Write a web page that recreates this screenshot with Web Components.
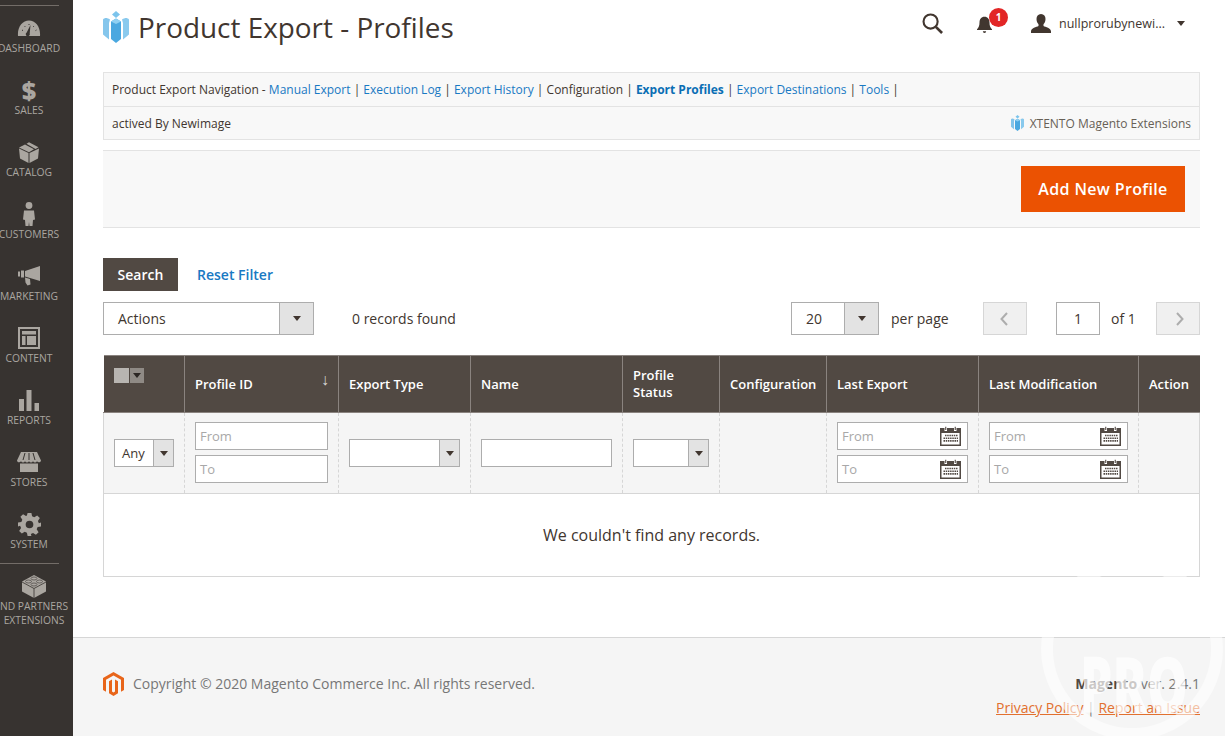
<!DOCTYPE html>
<html>
<head>
<meta charset="utf-8">
<title>Product Export - Profiles</title>
<style>
  html, body { margin: 0; height: 100%; overflow: hidden; }
  body { font-family: "Open Sans", "Liberation Sans", sans-serif; font-size: 14px; color: #41362f; background: #fff; }
</style>
</head>
<body>
<admin-shell>
  <admin-menu slot="menu">
    <menu-item icon="dashboard">Dashboard</menu-item>
    <menu-item icon="sales">Sales</menu-item>
    <menu-item icon="catalog">Catalog</menu-item>
    <menu-item icon="customers">Customers</menu-item>
    <menu-item icon="marketing">Marketing</menu-item>
    <menu-item icon="content">Content</menu-item>
    <menu-item icon="reports">Reports</menu-item>
    <menu-item icon="stores">Stores</menu-item>
    <menu-item icon="system">System</menu-item>
    <menu-item icon="extensions" class="last">nd Partners<br>Extensions</menu-item>
  </admin-menu>
  <page-header>Product Export - Profiles</page-header>
  <export-nav></export-nav>
  <action-bar>Add New Profile</action-bar>
  <grid-toolbar></grid-toolbar>
  <profile-grid></profile-grid>
  <page-footer slot="footer"></page-footer>
</admin-shell>
<water-mark></water-mark>

<script>
// shared svg bits
const XTENTO = `<svg viewBox="0 0 26 32" width="100%" height="100%"><path fill="#7cc4ec" d="M13 0l4 3.500-4 3.500-4-3.500z"/><path fill="#5cb3e6" d="M7 8.500C4 6.500 1.500 6.500 0 8.500v15l6 5V12z" opacity=".75"/><path fill="#6dbdea" d="M19 8.500c3-2 5.500-2 7 0v15l-6 5V12z" opacity=".8"/><path fill="#4aa8e0" d="M8 10.500l5-3 5 3V28l-5 4-5-4z"/><path fill="#8fd0f2" d="M13 7.500l5 3-5 2.500-5-2.500z"/></svg>`;

const MENU_ICONS = {
  dashboard: `<svg viewBox="0 0 24 16" width="24" height="16"><path fill="#aaa6a0" fill-rule="evenodd" d="M1 16C.2 7 5.500 .5 12 .5S23.800 7 23 16zM13.500 5l-3.800 7.500a2 2 0 1 0 3 1z"/><path stroke="#373330" stroke-width="1" d="M5 10l1 .6M7.500 6l.7.8M12 4v1M17 6l-.7.8M19.500 10l-1 .6" fill="none"/></svg>`,
  sales: `<span style="font:800 25px/24px 'Open Sans',sans-serif;color:#aaa6a0">$</span>`,
  catalog: `<svg viewBox="0 0 20 21" width="20" height="21"><path fill="#aaa6a0" d="M0 6.500L9.500 11v10L1 16.500zM20 6.500L10.500 11v10l8.500-4.500zM0 5.500L6 2.500l9 4.700-5 3zM7.500 1.700L10 .3l9.500 5-3 1.600z"/></svg>`,
  customers: `<svg viewBox="0 0 12 24" width="12" height="24"><circle cx="6" cy="3.500" r="3.400" fill="#aaa6a0"/><path fill="#aaa6a0" d="M1 8.500h10l1 9-2 .5-.5 6H6.500L6 20l-.5 4H2.500L2 18l-2-.5z"/></svg>`,
  marketing: `<svg viewBox="0 0 22 20" width="22" height="20"><path fill="#aaa6a0" d="M22 0v15L7 10.500V5zM0 5.500h2v5H0zM3 4.500h3v7H3zM7 11.500l5 1.500 .5 5.500-3 1-2-3z"/></svg>`,
  content: `<svg viewBox="0 0 22 22" width="22" height="22"><path fill="#aaa6a0" fill-rule="evenodd" d="M0 0h22v22H0zM2 2v18h18V2z"/><path fill="#aaa6a0" d="M4 4h14v3.500H4zM4 9h3.500v9H4zM9 9h9v9H9z"/></svg>`,
  reports: `<svg viewBox="0 0 20 21" width="20" height="21"><path fill="#aaa6a0" d="M0 9h5v12H0zM7.500 0h5v21h-5zM15.500 13h4.500v8h-4.500z"/></svg>`,
  stores: `<svg viewBox="0 0 24 20" width="24" height="20"><path fill="#aaa6a0" d="M4 0h16l4 8.500c0 2-3 2.500-4 .8-1 1.700-3 1.700-4 0-1 1.700-3 1.700-4 0-1 1.700-3 1.700-4 0-1 1.700-3 1.700-4 0-1 1.700-4 1.200-4-.8z"/><path stroke="#373330" stroke-width="1" d="M8 1L6 8M12 1v7M16 1l2 7" fill="none"/><path fill="#aaa6a0" d="M3 11.500h18V20H3z"/></svg>`,
  system: `<svg viewBox="0 0 24 24" width="23" height="23"><path fill="#aaa6a0" fill-rule="evenodd" d="M10 0h4l.7 3.500 2.300 1 3-2 2.800 2.800-2 3 1 2.300L24 10v4l-3.500.7-1 2.300 2 3-2.800 2.800-3-2-2.300 1L14 24h-4l-.7-3.500-2.300-1-3 2L1.200 18.700l2-3-1-2.300L0 14v-4l3.500-.7 1-2.300-2-3L5.300 1.200l3 2 1-.7zM12 8a4 4 0 1 0 0 8 4 4 0 0 0 0-8z"/></svg>`,
  extensions: `<svg viewBox="0 0 24 23" width="24" height="23"><path fill="#aaa6a0" d="M12 0l12 6.500v10L12 23 0 16.500v-10z"/><path stroke="#373330" stroke-width=".8" fill="none" d="M0 7l12 6.500L24 7M12 13.500V23"/><ellipse cx="12" cy="3.500" rx="3" ry="1.500" fill="#aaa6a0" stroke="#373330" stroke-width=".6"/><ellipse cx="6.500" cy="6.500" rx="3" ry="1.500" fill="#aaa6a0" stroke="#373330" stroke-width=".6"/><ellipse cx="17.500" cy="6.500" rx="3" ry="1.500" fill="#aaa6a0" stroke="#373330" stroke-width=".6"/><ellipse cx="12" cy="9.500" rx="3" ry="1.500" fill="#aaa6a0" stroke="#373330" stroke-width=".6"/></svg>`
};

class AdminShell extends HTMLElement {
  constructor() {
    super();
    this._root = this.attachShadow({mode: 'open'});
    this._root.innerHTML = `
      <style>
        :host { display: flex; height: 736px; overflow: hidden; }
        .side { flex: 0 0 73px; width: 73px; background: #373330; overflow: hidden; }
        .main { flex: 1; min-width: 0; display: flex; flex-direction: column; }
        .content { flex: 0 0 637px; box-sizing: border-box; padding: 0 25px 0 30px; }
        .foot { flex: 1; display: flex; }
      </style>
      <div class="side"><slot name="menu"></slot></div>
      <div class="main">
        <div class="content"><slot></slot></div>
        <div class="foot"><slot name="footer"></slot></div>
      </div>
    `;
  }
}

class AdminMenu extends HTMLElement {
  constructor() {
    super();
    this._root = this.attachShadow({mode: 'open'});
    this._root.innerHTML = `
      <style>
        :host { display: block; width: 88px; margin-left: -15px; padding-top: 5px; }
        .rule { width: 59px; margin-left: 15px; border-top: 1px solid #736d68; }
      </style>
      <div class="rule"></div>
      <slot></slot>
    `;
    // the divider before the last entry
    const rule = document.createElement('menu-rule');
    const last = this.querySelector('.last');
    if (last) this.insertBefore(rule, last);
  }
}

class MenuRule extends HTMLElement {
  constructor() {
    super();
    this.attachShadow({mode: 'open'}).innerHTML = `
      <style>:host { display: block; width: 59px; margin: -1px 0 0 15px; border-top: 1px solid #736d68; }</style>
    `;
  }
}

class MenuItem extends HTMLElement {
  constructor() {
    super();
    const icon = this.getAttribute('icon');
    this._root = this.attachShadow({mode: 'open'});
    this._root.innerHTML = `
      <style>
        :host { display: block; height: 62px; box-sizing: border-box; text-align: center; color: #aaa6a0; }
        :host(.last) { height: 72px; padding-left: 10px; }
        .ico { box-sizing: border-box; height: 34px; padding-top: 10px; display: flex; align-items: center; justify-content: center; }
        .lbl { font-size: 10.3px; line-height: 14px; margin-top: 1px; text-transform: uppercase; white-space: nowrap; }
      </style>
      <div class="ico">${MENU_ICONS[icon] || ''}</div>
      <div class="lbl"><slot></slot></div>
    `;
  }
}

class PageHeader extends HTMLElement {
  constructor() {
    super();
    this._root = this.attachShadow({mode: 'open'});
    this._root.innerHTML = `
      <style>
        :host { display: flex; align-items: center; height: 72px; box-sizing: border-box; padding: 0 15px 18px 0; }
        .logo { width: 26px; height: 32px; margin-right: 9px; }
        h1 { margin: 0; font-size: 27.9px; font-weight: 400; line-height: 36px; color: #41362f; flex: 1; }
        .tools { display: flex; align-items: center; margin-bottom: 7px; }
        .search { width: 21px; height: 21px; margin-right: 34px; }
        .bell { position: relative; width: 22px; height: 22px; margin-right: 32px; }
        .badge { position: absolute; left: 12px; top: -5px; width: 19px; height: 19px; border-radius: 50%; background: #e22626; color: #fff; font-size: 10px; font-weight: 700; line-height: 19px; text-align: center; }
        .user { width: 20px; height: 20px; margin-right: 8px; }
        .name { font-size: 12.5px; color: #41362f; width: 118px; white-space: nowrap; }
        .caret { width: 0; height: 0; border: 4.5px solid transparent; border-top: 5px solid #41362f; border-bottom: 0; }
      </style>
      <div class="logo">${XTENTO}</div>
      <h1><slot></slot></h1>
      <div class="tools">
        <svg class="search" viewBox="0 0 22 22"><circle cx="9" cy="9" r="7.400" fill="none" stroke="#41362f" stroke-width="2.200"/><path d="M14.500 14.500l6.500 6.500" stroke="#41362f" stroke-width="2.800"/></svg>
        <div class="bell">
          <svg viewBox="0 0 18 22" width="15" height="20" style="margin-top:2px"><path fill="#41362f" d="M9 1c4 0 6 3 6 7 0 4 1 6 3 8v1H0v-1c2-2 3-4 3-8 0-4 2-7 6-7zM7 18.500h4a2 2 0 0 1-4 0z"/></svg>
          <span class="badge">1</span>
        </div>
        <svg class="user" viewBox="0 0 20 20"><path fill="#41362f" d="M10 0c3 0 4.500 2.200 4.500 5 0 2.300-1 4.300-2 5.300v1.700c2 1 7.500 2 7.500 5.500V19H0v-1.500c0-3.500 5.500-4.500 7.500-5.500v-1.700c-1-1-2-3-2-5.300C5.500 2.200 7 0 10 0z"/></svg>
        <span class="name">nullprorubynewi...</span>
        <span class="caret"></span>
      </div>
    `;
  }
}

class ExportNav extends HTMLElement {
  constructor() {
    super();
    this._root = this.attachShadow({mode: 'open'});
    this._root.innerHTML = `
      <style>
        :host { display: block; border: 1px solid #e3e3e3; background: #f8f8f8; font-size: 12px; color: #41362f; }
        .row { display: flex; align-items: center; padding: 0 8px; }
        .one { height: 33px; border-bottom: 1px solid #e3e3e3; }
        .two { height: 32px; justify-content: space-between; }
        .links { white-space: pre; letter-spacing: -.002px; }
        a { text-decoration: none; color: #1979c3; }
        a.on { font-weight: 700; color: #0a6eb4; }
        .brand { display: flex; align-items: center; color: #676056; }
        .brand i { display: block; width: 13px; height: 16px; margin-right: 6px; }
      </style>
      <div class="row one"><span class="links">Product Export Navigation - <a href="#">Manual Export</a> | <a href="#">Execution Log</a> | <a href="#">Export History</a> | Configuration | <a class="on" href="#">Export Profiles</a> | <a href="#">Export Destinations</a> | <a href="#">Tools</a> |</span></div>
      <div class="row two"><span>actived By Newimage</span><span class="brand"><i>${XTENTO}</i>XTENTO Magento Extensions</span></div>
    `;
  }
}

class ActionBar extends HTMLElement {
  constructor() {
    super();
    this._root = this.attachShadow({mode: 'open'});
    this._root.innerHTML = `
      <style>
        :host { display: flex; justify-content: flex-end; align-items: center; box-sizing: border-box; height: 78px; margin-top: 10px; padding-right: 15px; background: #f8f8f8; border-top: 1px solid #e3e3e3; border-bottom: 1px solid #e3e3e3; }
        button { height: 46px; width: 164px; border: 1px solid #eb5202; background: #eb5202; color: #fff; font: 600 16px "Open Sans", sans-serif; letter-spacing: .35px; padding: 0; }
      </style>
      <button><slot></slot></button>
    `;
  }
}

class SelectBox extends HTMLElement {
  constructor() {
    super();
    this._root = this.attachShadow({mode: 'open'});
    this._root.innerHTML = `
      <style>
        :host { display: flex; box-sizing: border-box; height: 28px; border: 1px solid #adadad; background: #fff; font-size: 13px; color: #41362f; }
        .val { flex: 1; min-width: 0; display: flex; align-items: center; padding-left: var(--pad, 7px); }
        .btn { flex: 0 0 var(--btn, 19px); background: #e3e3e3; border-left: 1px solid #adadad; display: flex; align-items: center; justify-content: center; }
        .btn i { width: 0; height: 0; border: 4.5px solid transparent; border-top: 5px solid #41362f; border-bottom: 0; }
      </style>
      <div class="val"><slot></slot></div>
      <div class="btn"><i></i></div>
    `;
  }
}

class TextBox extends HTMLElement {
  constructor() {
    super();
    const cal = this.hasAttribute('calendar');
    this._root = this.attachShadow({mode: 'open'});
    this._root.innerHTML = `
      <style>
        :host { display: flex; align-items: center; justify-content: space-between; box-sizing: border-box; height: 28px; padding: 0 6px 0 4px; border: 1px solid #adadad; background: #fff; font-size: 13px; color: #a8a8a8; }
        svg { display: block; }
      </style>
      <span><slot></slot></span>
      ${cal ? `<svg viewBox="0 0 21 21" width="21" height="21"><path fill="#514943" d="M0 3h21v18H0z"/><path fill="#fff" d="M1.500 8h18v11.500h-18z"/><path fill="#fff" d="M4.500 1h2.500v5H4.500zM14 1h2.500v5H14z"/><path fill="#514943" d="M5.200 1.800h1.100v3.200H5.200zM14.700 1.800h1.100v3.200h-1.100z"/><path stroke="#514943" stroke-width="1.600" stroke-dasharray="1.500 .7" d="M5 10.500h13M3.500 13.200h14.500M3.500 15.900h14.500" fill="none"/></svg>` : ''}
    `;
  }
}

class GridToolbar extends HTMLElement {
  constructor() {
    super();
    this._root = this.attachShadow({mode: 'open'});
    this._root.innerHTML = `
      <style>
        :host { display: block; padding-top: 30px; font-size: 14px; color: #41362f; }
        .top { display: flex; align-items: center; height: 33px; gap: 19px; }
        .search { box-sizing: border-box; width: 75px; height: 33px; background: #514943; color: #fff; font-weight: 600; display: flex; align-items: center; justify-content: center; }
        .reset { color: #1979c3; font-weight: 600; }
        .bottom { display: flex; align-items: center; height: 33px; margin-top: 11px; }
        select-box { height: 33px; font-size: 14px; }
        .actions { width: 211px; --pad: 14px; --btn: 33px; }
        .found { margin-left: 38px; flex: 1; }
        .perpage { width: 88px; --pad: 14px; --btn: 33px; }
        .pp { margin-left: 12px; width: 92px; }
        .nav { box-sizing: border-box; width: 44px; height: 33px; background: #f0f0f0; border: 1px solid #d6d6d6; display: flex; align-items: center; justify-content: center; }
        .cur { box-sizing: border-box; width: 44px; height: 33px; margin-left: 29px; border: 1px solid #adadad; display: flex; align-items: center; justify-content: center; }
        .of { margin-left: 11px; width: 45px; }
      </style>
      <div class="top"><span class="search">Search</span><span class="reset">Reset Filter</span></div>
      <div class="bottom">
        <select-box class="actions">Actions</select-box>
        <span class="found">0 records found</span>
        <select-box class="perpage">20</select-box>
        <span class="pp">per page</span>
        <span class="nav"><svg width="8" height="14" viewBox="0 0 8 14" style="margin-right:3px"><path d="M7 1L1.500 7 7 13" fill="none" stroke="#adadad" stroke-width="2"/></svg></span>
        <span class="cur">1</span>
        <span class="of">of 1</span>
        <span class="nav"><svg width="8" height="14" viewBox="0 0 8 14" style="margin-left:3px"><path d="M1 1l5.500 6L1 13" fill="none" stroke="#adadad" stroke-width="2"/></svg></span>
      </div>
    `;
  }
}

class ProfileGrid extends HTMLElement {
  constructor() {
    super();
    this._root = this.attachShadow({mode: 'open'});
    this._root.innerHTML = `
      <style>
        :host { display: block; margin-top: 20px; }
        table { width: 1096px; table-layout: fixed; border-collapse: collapse; font-size: 13px; }
        th { box-sizing: border-box; height: 57px; background: #514943; color: #fff; font-weight: 600; text-align: left; padding: 0 10px; line-height: 17px; border-left: 1px solid #8a837f; border-top: 1px solid #8a837f; border-bottom: 1px solid #8a837f; position: relative; }
        th:first-child { border-left: 0; }
        .arrow { position: absolute; right: 9px; top: 15px; font-weight: 400; font-size: 16px; color: #d6d6d6; }
        .mass { position: absolute; left: 10px; top: 12px; display: flex; width: 30px; height: 15px; background: #b8b5b1; }
        .mass b { width: 15px; margin-left: 15px; background: #8f8a85; display: flex; align-items: center; justify-content: center; border-left: 1px solid #514943; }
        .mass i { width: 0; height: 0; border: 4px solid transparent; border-top: 5px solid #2b2623; border-bottom: 0; }
        td.f { box-sizing: border-box; height: 81px; background: #f5f5f5; padding: 0 10px; border-left: 1px dashed #d6d6d6; border-bottom: 1px solid #d6d6d6; vertical-align: middle; }
        td.f:first-child { border-left: 1px solid #d6d6d6; }
        td.f:last-child { border-right: 1px solid #d6d6d6; }
        .stack { display: flex; flex-direction: column; gap: 5px; margin-top: -2px; }
        .stack text-box { width: 100%; }
        td.empty { height: 83px; box-sizing: border-box; text-align: center; font-size: 16px; color: #41362f; border: 1px solid #d6d6d6; border-top: 0; background: #fff; }
      </style>
      <table>
        <colgroup>
          <col style="width:81px"><col style="width:154px"><col style="width:132px"><col style="width:152px"><col style="width:97px"><col style="width:107px"><col style="width:152px"><col style="width:160px"><col style="width:61px">
        </colgroup>
        <tr>
          <th><span class="mass"><b><i></i></b></span></th>
          <th>Profile ID<span class="arrow">↓</span></th>
          <th>Export Type</th>
          <th>Name</th>
          <th>Profile Status</th>
          <th>Configuration</th>
          <th>Last Export</th>
          <th>Last Modification</th>
          <th>Action</th>
        </tr>
        <tr>
          <td class="f"><select-box style="width:60px">Any</select-box></td>
          <td class="f"><div class="stack"><text-box>From</text-box><text-box>To</text-box></div></td>
          <td class="f"><select-box style="width:111px"></select-box></td>
          <td class="f"><text-box></text-box></td>
          <td class="f"><select-box style="width:76px"></select-box></td>
          <td class="f"></td>
          <td class="f"><div class="stack"><text-box calendar>From</text-box><text-box calendar>To</text-box></div></td>
          <td class="f"><div class="stack"><text-box calendar>From</text-box><text-box calendar>To</text-box></div></td>
          <td class="f"></td>
        </tr>
        <tr><td class="empty" colspan="9">We couldn't find any records.</td></tr>
      </table>
    `;
  }
}

class PageFooter extends HTMLElement {
  constructor() {
    super();
    this._root = this.attachShadow({mode: 'open'});
    this._root.innerHTML = `
      <style>
        :host { display: flex; flex: 1; justify-content: space-between; box-sizing: border-box; padding: 34px 25px 0 30px; background: #f5f5f5; border-top: 1px solid #d6d6d6; font-size: 14px; color: #777; }
        .left { display: flex; align-items: flex-start; }
        .left svg { margin-right: 9px; }
        .left span { line-height: 24px; }
        .right { text-align: right; line-height: 24px; }
        .right b { color: #514943; }
        a { color: #e2702f; }
      </style>
      <div class="left">
        <svg width="21" height="24" viewBox="0 0 21 24"><path fill="#e8651a" d="M10.500 0L21 6v12l-3 1.700V7.700l-7.500-4.300L3 7.700v12L0 18V6z"/><path fill="#e8651a" d="M9 7.500l-3 1.700v12L10.500 24 15 21.200v-12l-3-1.700v12l-1.500 .9L9 19.500z"/></svg>
        <span>Copyright © 2020 Magento Commerce Inc. All rights reserved.</span>
      </div>
      <div class="right">
        <div><b>Magento</b> ver. 2.4.1</div>
        <div><a href="#">Privacy Policy</a> | <a href="#">Report an Issue</a></div>
      </div>
    `;
  }
}

// translucent stamp lying over the bottom right corner
class WaterMark extends HTMLElement {
  constructor() {
    super();
    this._root = this.attachShadow({mode: 'open'});
    this._root.innerHTML = `
      <style>
        :host { position: absolute; left: 1041px; top: 558px; width: 184px; height: 178px; overflow: hidden; pointer-events: none; }
        svg { display: block; overflow: visible; }
        text { font: 800 78px "Open Sans", sans-serif; fill: #fff; fill-opacity: .7; }
      </style>
      <svg width="184" height="178">
        <circle cx="91" cy="91" r="85" fill="none" stroke="#fff" stroke-opacity=".55" stroke-width="12"/>
        <text x="39" y="155" textLength="108" lengthAdjust="spacingAndGlyphs">PRO</text>
      </svg>
    `;
  }
}

customElements.define('admin-shell', AdminShell);
customElements.define('menu-rule', MenuRule);
customElements.define('admin-menu', AdminMenu);
customElements.define('menu-item', MenuItem);
customElements.define('page-header', PageHeader);
customElements.define('export-nav', ExportNav);
customElements.define('action-bar', ActionBar);
customElements.define('select-box', SelectBox);
customElements.define('text-box', TextBox);
customElements.define('grid-toolbar', GridToolbar);
customElements.define('profile-grid', ProfileGrid);
customElements.define('page-footer', PageFooter);
customElements.define('water-mark', WaterMark);
</script>
</body>
</html>
